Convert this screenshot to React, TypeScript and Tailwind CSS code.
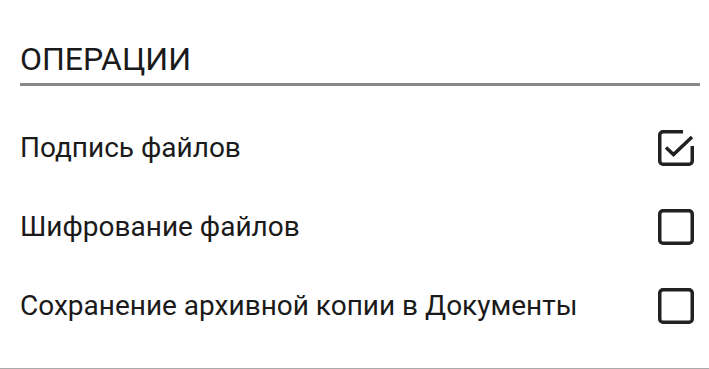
const options = [
  { label: "Подпись файлов", checked: true },
  { label: "Шифрование файлов", checked: false },
  { label: "Сохранение архивной копии в Документы", checked: false },
];

function CheckBox({ checked }: { checked: boolean }) {
  return (
    <svg width="36" height="36" viewBox="0 0 36 36" fill="none" className="shrink-0">
      {checked ? (
        <>
          <path
            d="M25 1.75H5A3.25 3.25 0 0 0 1.75 5v26A3.25 3.25 0 0 0 5 34.25h26A3.25 3.25 0 0 0 34.25 31V16"
            stroke="#212121"
            strokeWidth="3.5"
          />
          <path d="M8 17.5l7.5 7L34 7" stroke="#212121" strokeWidth="3.5" />
        </>
      ) : (
        <rect x="1.75" y="1.75" width="32.5" height="32.5" rx="3.25" stroke="#212121" strokeWidth="3.5" />
      )}
    </svg>
  );
}

export default function App() {
  return (
    <div className="h-[369px] w-[709px] bg-white font-['Roboto',sans-serif] text-[#1a1a1a] border-b border-[#aaaaaa] overflow-hidden">
      <div className="pl-5 pr-[9px] pt-[40px]">
        <div className="border-b-[3px] border-[#888888] pb-[5px] text-[32px] leading-[38px]">ОПЕРАЦИИ</div>
        <div className="flex flex-col pt-[22px]">
          {options.map((o) => (
            <div key={o.label} className="flex h-[79px] items-center justify-between pr-[6px]">
              <span className="text-[28px]">{o.label}</span>
              <CheckBox checked={o.checked} />
            </div>
          ))}
        </div>
      </div>
    </div>
  );
}
